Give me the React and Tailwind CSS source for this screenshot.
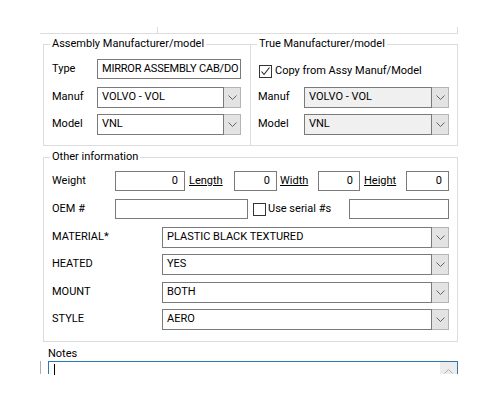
import React from "react";

const Chevron = ({ up = false, color = "#555" }) => (
  <svg width="9" height="5" viewBox="0 0 9 5">
    <polyline
      points={up ? "0.5,4.5 4.5,0.5 8.5,4.5" : "0.5,0.5 4.5,4.5 8.5,0.5"}
      fill="none"
      stroke={color}
      strokeWidth="0.9"
    />
  </svg>
);

const TextBox = ({ value = "", className = "", right = false, tight = false }) => (
  <div
    className={`h-[20px] flex items-center border border-[#7a7a7a] bg-white overflow-hidden ${
      right ? "justify-end pr-[6px]" : "pl-[4px]"
    } ${className}`}
  >
    <span className={`whitespace-nowrap ${tight ? "tracking-[-0.2px]" : ""}`}>{value}</span>
  </div>
);

const Combo = ({ value, className = "", disabled = false }) => (
  <div className={`h-[21px] flex ${className}`}>
    <div
      className={`flex-1 flex items-center border border-[#7a7a7a] pl-[4px] ${
        disabled ? "bg-[#f0f0f0]" : "bg-white"
      }`}
    >
      {value}
    </div>
    <div className="w-[17px] flex items-center justify-center border border-l-0 border-[#b4b4b4] bg-[#e3e3e3]">
      <Chevron />
    </div>
  </div>
);

const CheckBox = ({ checked = false }) => (
  <div className="w-[13px] h-[13px] border border-[#333] bg-white flex items-center justify-center">
    {checked && (
      <svg width="11" height="11" viewBox="0 0 11 11">
        <polyline points="1.5,5.5 4,8.5 9.5,1.5" fill="none" stroke="#222" strokeWidth="1.1" />
      </svg>
    )}
  </div>
);

const Group = ({ title, className = "", children }) => (
  <fieldset className={`border border-[#dcdcdc] ${className}`}>
    <legend className="ml-[6px] px-[2px] leading-[14px]">{title}</legend>
    {children}
  </fieldset>
);

const Row = ({ label, labelW, className = "", children }) => (
  <div className={`flex items-center ${className}`}>
    <div className={`shrink-0 ${labelW}`}>{label}</div>
    {children}
  </div>
);

export default function App() {
  return (
    <div className="w-[500px] h-[400px] bg-white text-black text-[11px] font-['Roboto',sans-serif] overflow-hidden">
      {/* bottom edge of the panel above */}
      <div className="ml-[40px] w-[418px] h-[34px] border-b border-[#dcdcdc] flex items-end">
        <div className="w-[117px]" />
        <div className="w-px h-[6px] bg-[#dcdcdc]" />
        <div className="flex-1" />
        <div className="w-px h-[6px] bg-[#dcdcdc]" />
      </div>

      <div className="mt-[3px] ml-[43px] flex">
        <Group title="Assembly Manufacturer/model" className="w-[208px] h-[109px]">
          <div className="pl-[8px]">
            <Row label="Type" labelW="w-[45px]" className="mt-[8px]">
              <TextBox value="MIRROR ASSEMBLY CAB/DO" tight className="w-[144px]" />
            </Row>
            <Row label="Manuf" labelW="w-[45px]" className="mt-[8px]">
              <Combo value="VOLVO - VOL" className="w-[144px]" />
            </Row>
            <Row label="Model" labelW="w-[45px]" className="mt-[6px]">
              <Combo value="VNL" className="w-[144px]" />
            </Row>
          </div>
        </Group>

        <Group title="True Manufacturer/model" className="w-[207px] h-[109px] border-l-0">
          <div className="pl-[7px]">
            <div className="mt-[13px] h-[14px] flex items-center gap-[3px] pl-[1px]">
              <CheckBox checked />
              <span>Copy from Assy Manuf/Model</span>
            </div>
            <Row label="Manuf" labelW="w-[46px]" className="mt-[9px]">
              <Combo value="VOLVO - VOL" className="w-[145px]" disabled />
            </Row>
            <Row label="Model" labelW="w-[46px]" className="mt-[6px]">
              <Combo value="VNL" className="w-[145px]" disabled />
            </Row>
          </div>
        </Group>
      </div>

      <Group title="Other information" className="mt-[4px] ml-[43px] w-[415px] h-[192px]">
        <div className="pl-[8px]">
          <Row label="Weight" labelW="w-[63px]" className="mt-[7px]">
            <TextBox value="0" right className="w-[70px]" />
            <span className="ml-[4px] w-[45px] underline">Length</span>
            <TextBox value="0" right className="w-[43px]" />
            <span className="ml-[3px] w-[38px] underline">Width</span>
            <TextBox value="0" right className="w-[42px]" />
            <span className="ml-[4px] w-[42px] underline">Height</span>
            <TextBox value="0" right className="w-[43px]" />
          </Row>
          <Row label="OEM #" labelW="w-[63px]" className="mt-[8px]">
            <TextBox className="w-[133px]" />
            <div className="ml-[5px] w-[96px] flex items-center gap-[2px]">
              <CheckBox />
              <span>Use serial #s</span>
            </div>
            <TextBox className="w-[100px]" />
          </Row>
          <Row label="MATERIAL*" labelW="w-[110px]" className="mt-[8px]">
            <Combo value="PLASTIC BLACK TEXTURED" className="w-[287px]" />
          </Row>
          <Row label="HEATED" labelW="w-[110px]" className="mt-[6px]">
            <Combo value="YES" className="w-[287px]" />
          </Row>
          <Row label="MOUNT" labelW="w-[110px]" className="mt-[7px]">
            <Combo value="BOTH" className="w-[287px]" />
          </Row>
          <Row label="STYLE" labelW="w-[110px]" className="mt-[6px]">
            <Combo value="AERO" className="w-[287px]" />
          </Row>
        </div>
      </Group>

      <div className="ml-[48px] mt-[5px] leading-[14px]">Notes</div>
      <div className="flex">
        <div className="ml-[40px] w-px h-[13px] bg-[#b0b0b0]" />
        <div className="ml-[7px] w-[410px] h-[13px] border border-b-0 border-[#2f78ae] flex">
          <div className="flex-1 pl-[5px] pt-[2px]">
            <div className="w-px h-[11px] bg-black" />
          </div>
          <div className="w-[17px] bg-[#ececec] flex justify-center pt-[7px]">
            <Chevron up color="#a8a8a8" />
          </div>
        </div>
      </div>
    </div>
  );
}
